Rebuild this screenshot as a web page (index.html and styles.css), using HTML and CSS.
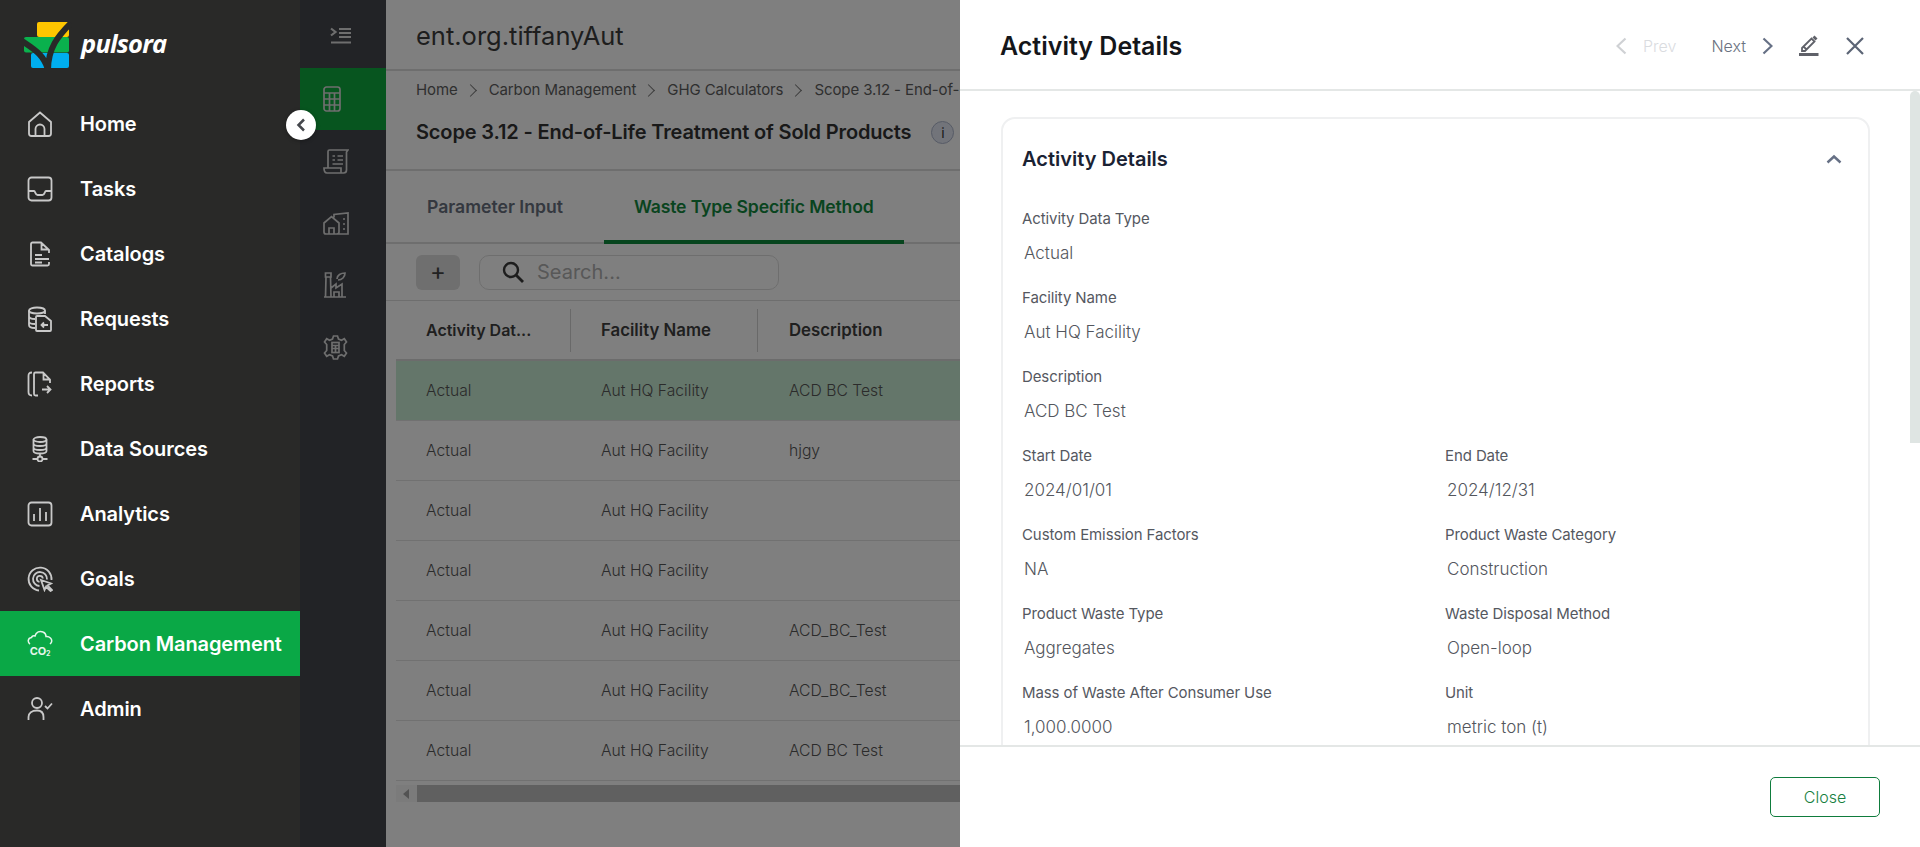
FILE: index.html
```html
<!DOCTYPE html>
<html lang="en">
<head>
    <meta charset="UTF-8">
    <meta name="viewport" content="width=device-width, initial-scale=1.0">
    <title>Pulsora - Activity Details</title>
    <link rel="stylesheet" href="styles.css">
</head>
<body>
    <div class="app">
        <aside class="sidebar">
            <div class="brand">
                <svg class="brand-mark" width="48" height="48" viewBox="0 0 48 48">
                    <rect x="13" y="0" width="32" height="15" rx="2" fill="#ffc600"/>
                    <rect x="0" y="15" width="45" height="15.5" rx="2" fill="#0ab14d"/>
                    <rect x="7" y="31" width="38" height="15" rx="2" fill="#00aeef"/>
                    <path d="M-2 19 C8 26 20 32 24 48 M47 1 C34 14 24 26 24 48" fill="none" stroke="#292928" stroke-width="6"/>
                    <path d="M-1 12 H9 V15 H-1 Z" fill="#292928"/>
                </svg>
                <span class="brand-name">pulsora</span>
            </div>
            <nav class="nav">
                <a class="nav-item">
                    <svg class="nav-icon" viewBox="0 0 26 26"><path d="M2 11 L13 1.500 L24 11 V22.500 A2.500 2.500 0 0 1 21.500 25 H4.500 A2.500 2.500 0 0 1 2 22.500 Z M8.500 25 V18 A4.500 4.500 0 0 1 17.500 18 V25"/></svg>
                    <span>Home</span>
                </a>
                <a class="nav-item">
                    <svg class="nav-icon" viewBox="0 0 26 26"><rect x="1.500" y="1.500" width="23" height="23" rx="3"/><path d="M1.500 15 H7 C8.500 15 8 19 10.500 19 H15.500 C18 19 17.500 15 19 15 H24.500"/></svg>
                    <span>Tasks</span>
                </a>
                <a class="nav-item">
                    <svg class="nav-icon" viewBox="0 0 26 26"><path d="M22 21 V23 A1.500 1.500 0 0 1 20.500 24.500 H5.500 A1.500 1.500 0 0 1 4 23 V3 A1.500 1.500 0 0 1 5.500 1.500 H14 L22 9 V12 M14.500 2 V8.500 H21.500 M8 14 H15 M8 18 H22 M8 21.500 H15"/></svg>
                    <span>Catalogs</span>
                </a>
                <a class="nav-item">
                    <svg class="nav-icon" viewBox="0 0 26 26"><ellipse cx="10" cy="4.500" rx="8" ry="3"/><path d="M2 4.500 V19 C2 21 4 22 8 22 M18 4.500 V8 M2 10 C2 12 5 13 8 13 M2 15.500 C2 17 4 18 8 18"/><path d="M9 11 A1 1 0 0 1 10 10 H18 L24 15 V24 A1 1 0 0 1 23 25 H10 A1 1 0 0 1 9 24 Z M21 19 H14.500 M17 16.500 L14.500 19 L17 21.500"/></svg>
                    <span>Requests</span>
                </a>
                <a class="nav-item">
                    <svg class="nav-icon" viewBox="0 0 26 26"><path d="M5 1.500 C2 1.500 1.500 3 1.500 5 V21 C1.500 23 2 24.500 5 24.500 M11 24.500 H8.500 A1.500 1.500 0 0 1 7 23 V3 A1.500 1.500 0 0 1 8.500 1.500 H16 L23 8.500 V12 M16.500 2 V8.500 H22.500 M15 18.500 H23.500 M20 15 L23.500 18.500 L20 22"/></svg>
                    <span>Reports</span>
                </a>
                <a class="nav-item">
                    <svg class="nav-icon" viewBox="0 0 26 26"><ellipse cx="13" cy="3.500" rx="6.500" ry="2.500"/><path d="M6.500 3.500 V15 C6.500 16.500 9 17.500 13 17.500 C17 17.500 19.500 16.500 19.500 15 V3.500 M6.500 7.500 C6.500 9 9 10 13 10 C17 10 19.500 9 19.500 7.500 M6.500 11.500 C6.500 13 9 14 13 14 C17 14 19.500 13 19.500 11.500 M13 17.500 V20.500 M5.500 23 H10.500 M15.500 23 H20.500"/><circle cx="13" cy="23" r="2.500"/></svg>
                    <span>Data Sources</span>
                </a>
                <a class="nav-item">
                    <svg class="nav-icon" viewBox="0 0 26 26"><rect x="1.500" y="1.500" width="23" height="23" rx="3"/><path d="M7 20 V13 M13 20 V7 M19 20 V11"/></svg>
                    <span>Analytics</span>
                </a>
                <a class="nav-item">
                    <svg class="nav-icon" viewBox="0 0 26 26"><path d="M24.500 14 A11.500 11.500 0 1 0 12 24.500 M20 13.500 A7 7 0 1 0 12.500 20 M15.800 12.500 A3 3 0 1 0 12.500 15.800"/><path d="M14 14 L24 17.500 L20.500 19.500 L25 24 L23.500 25 L19 20.800 L17.500 24 Z"/></svg>
                    <span>Goals</span>
                </a>
                <a class="nav-item is-active">
                    <span class="co2-icon">
                        <svg class="cloud-icon" viewBox="0 0 26 15"><path d="M3 14 C0.500 12.500 0.500 8 4.500 7.500 C5 6 6.500 5.500 8 6 C9 2 13 0.500 16 2 C18.500 3 19 5 19 6.500 C22.500 6 25.500 9 24.500 12 C24.200 13 23.500 13.500 23 14"/></svg>
                        <span class="co2-text">CO<sub>2</sub></span>
                    </span>
                    <span>Carbon Management</span>
                </a>
                <a class="nav-item">
                    <svg class="nav-icon" viewBox="0 0 26 26"><circle cx="10" cy="7" r="5"/><path d="M1.500 24 V21 C1.500 17 5 14.500 10 14.500 C13.500 14.500 16.500 16 16.500 21 V24 M18 10 L20.500 12.500 L25 7.500"/></svg>
                    <span>Admin</span>
                </a>
            </nav>
        </aside>
        <button class="sidebar-toggle" aria-label="Collapse">
            <svg width="12" height="14" viewBox="0 0 12 14"><path d="M9 1.500 L3.500 7 L9 12.500" fill="none" stroke="#45474c" stroke-width="2.500"/></svg>
        </button>

        <div class="workspace">
            <div class="rail">
                <div class="rail-item rail-top">
                    <svg class="rail-icon" width="22" height="18" viewBox="0 0 22 18"><path d="M1 1.500 L5.500 5 L1 8.500 M9 2 H21 M9 6 H21 M9 10 H21 M1 15.500 H21" stroke-width="2.200"/></svg>
                </div>
                <div class="rail-item is-active">
                    <svg class="rail-icon" width="18" height="26" viewBox="0 0 18 26"><rect x="1" y="1" width="16" height="24" rx="2.500"/><path d="M1 7 H17 M1 13 H17 M1 19 H17 M6.500 7 V25 M11.500 7 V25"/></svg>
                </div>
                <div class="rail-item">
                    <svg class="rail-icon" width="26" height="25" viewBox="0 0 26 25"><path d="M5 19 V2.500 A1.500 1.500 0 0 1 6.500 1 H25 L23.500 3 V21 A3 3 0 0 1 20.500 24 H4 C2 24 1 22.500 1 19 H18 V24"/><path d="M9.500 7 H12 M14.500 7 H20 M9.500 11 H12 M14.500 11 H20 M9.500 15 H20"/></svg>
                </div>
                <div class="rail-item">
                    <svg class="rail-icon" width="26" height="23" viewBox="0 0 26 23"><path d="M1 11 L8.500 4.500 L16 11 V20 A2 2 0 0 1 14 22 H3 A2 2 0 0 1 1 20 Z M6 22 V16 H11 V22 M11 5.500 V2.500 L25 1 V22 H16 M20 7 H22 M20 12 H22 M20 17 H22"/></svg>
                </div>
                <div class="rail-item">
                    <svg class="rail-icon" width="24" height="26" viewBox="0 0 24 26"><path d="M1 25 H23 M2.500 25 L3 5 M8 25 L7.500 5 M2.500 1 H8 V5 H2.500 Z M8 16 L13 12 V16 L19 12 V25 M11 25 V20 H16 V25 M14 7 C14 3 18 1 22 1 C22 5 19 8 15 8"/></svg>
                </div>
                <div class="rail-item">
                    <svg class="rail-icon" width="25" height="25" viewBox="0 0 25 25"><path d="M10.500 1 H14.500 L15.500 4 L18.500 5.300 L21.300 3.700 L23.500 7 L21.300 9.500 V15.500 L23.500 18 L21.300 21.300 L18.500 19.700 L15.500 21 L14.500 24 H10.500 L9.500 21 L6.500 19.700 L3.700 21.300 L1.500 18 L3.700 15.500 V9.500 L1.500 7 L3.700 3.700 L6.500 5.300 L9.500 4 Z"/><rect x="9" y="7.500" width="7" height="10"/><path d="M9 10.500 H16 M9 13.500 H16 M12.500 10.500 V17.500"/></svg>
                </div>
            </div>

            <main class="main">
                <header class="main-top">ent.org.tiffanyAut</header>
                <div class="page-head">
                    <div class="crumbs">
                        <span>Home</span><i class="crumb-sep"></i>
                        <span>Carbon Management</span><i class="crumb-sep"></i>
                        <span>GHG Calculators</span><i class="crumb-sep"></i>
                        <span class="crumb-last">Scope 3.12 - End-of-Life Treatment of Sold Products</span>
                    </div>
                    <div class="page-title">
                        <h1>Scope 3.12 - End-of-Life Treatment of Sold Products</h1>
                        <span class="info-badge">i</span>
                    </div>
                </div>
                <div class="tabs">
                    <span class="tab">Parameter Input</span>
                    <span class="tab is-active">Waste Type Specific Method</span>
                </div>
                <div class="toolbar">
                    <button class="add-btn" aria-label="Add">+</button>
                    <div class="search">
                        <svg width="24" height="24" viewBox="0 0 24 24"><circle cx="10" cy="10" r="7" fill="none" stroke="#3a3a3a" stroke-width="2.400"/><path d="M15 15 L22 22" stroke="#3a3a3a" stroke-width="2.800"/></svg>
                        <span>Search...</span>
                    </div>
                </div>
                <div class="grid-wrap">
                    <div class="grid-head">
                        <div class="cell cell-a">Activity Dat...</div>
                        <div class="cell cell-b">Facility Name</div>
                        <div class="cell cell-c">Description</div>
                    </div>
                    <div class="grid-row is-selected">
                        <div class="cell cell-a">Actual</div><div class="cell cell-b">Aut HQ Facility</div><div class="cell cell-c">ACD BC Test</div>
                    </div>
                    <div class="grid-row">
                        <div class="cell cell-a">Actual</div><div class="cell cell-b">Aut HQ Facility</div><div class="cell cell-c">hjgy</div>
                    </div>
                    <div class="grid-row">
                        <div class="cell cell-a">Actual</div><div class="cell cell-b">Aut HQ Facility</div><div class="cell cell-c"></div>
                    </div>
                    <div class="grid-row">
                        <div class="cell cell-a">Actual</div><div class="cell cell-b">Aut HQ Facility</div><div class="cell cell-c"></div>
                    </div>
                    <div class="grid-row">
                        <div class="cell cell-a">Actual</div><div class="cell cell-b">Aut HQ Facility</div><div class="cell cell-c">ACD_BC_Test</div>
                    </div>
                    <div class="grid-row">
                        <div class="cell cell-a">Actual</div><div class="cell cell-b">Aut HQ Facility</div><div class="cell cell-c">ACD_BC_Test</div>
                    </div>
                    <div class="grid-row">
                        <div class="cell cell-a">Actual</div><div class="cell cell-b">Aut HQ Facility</div><div class="cell cell-c">ACD BC Test</div>
                    </div>
                    <div class="h-scroll">
                        <span class="h-scroll-arrow"></span>
                        <span class="h-scroll-thumb"></span>
                    </div>
                </div>
            </main>
            <div class="backdrop"></div>
        </div>

        <section class="drawer">
            <header class="drawer-head">
                <h2>Activity Details</h2>
                <div class="drawer-actions">
                    <div class="pager is-disabled">
                        <svg width="11" height="18" viewBox="0 0 11 18"><path d="M9.500 1.500 L1.500 9 L9.500 16.500"/></svg>
                        <span>Prev</span>
                    </div>
                    <div class="pager">
                        <span>Next</span>
                        <svg width="11" height="18" viewBox="0 0 11 18"><path d="M1.500 1.500 L9.500 9 L1.500 16.500"/></svg>
                    </div>
                    <svg class="edit-icon" width="20" height="21" viewBox="0 0 20 21"><path d="M3 13 L12.500 3.500 L15.500 6.500 L6 16 H3 Z M5 12 L7.500 14.500" fill="none" stroke="#5f6169" stroke-width="1.800"/><path d="M13.500 2.500 L15.500 0.500 L18.500 3.500 L16.500 5.500 Z" fill="#5f6169"/><rect x="0" y="18" width="19.500" height="3" fill="#5f6169"/></svg>
                    <svg class="close-icon" width="18" height="18" viewBox="0 0 18 18"><path d="M1 1 L17 17 M17 1 L1 17"/></svg>
                </div>
            </header>
            <div class="drawer-body">
                <div class="detail-card">
                    <div class="card-head">
                        <h3>Activity Details</h3>
                        <svg width="16" height="10" viewBox="0 0 16 10"><path d="M1.500 8.500 L8 2.500 L14.500 8.500" fill="none" stroke="#667085" stroke-width="2.400"/></svg>
                    </div>
                    <div class="fields">
                        <div class="field field-wide"><label>Activity Data Type</label><p>Actual</p></div>
                        <div class="field field-wide"><label>Facility Name</label><p>Aut HQ Facility</p></div>
                        <div class="field field-wide"><label>Description</label><p>ACD BC Test</p></div>
                        <div class="field"><label>Start Date</label><p>2024/01/01</p></div>
                        <div class="field"><label>End Date</label><p>2024/12/31</p></div>
                        <div class="field"><label>Custom Emission Factors</label><p>NA</p></div>
                        <div class="field"><label>Product Waste Category</label><p>Construction</p></div>
                        <div class="field"><label>Product Waste Type</label><p>Aggregates</p></div>
                        <div class="field"><label>Waste Disposal Method</label><p>Open-loop</p></div>
                        <div class="field"><label>Mass of Waste After Consumer Use</label><p>1,000.0000</p></div>
                        <div class="field"><label>Unit</label><p>metric ton (t)</p></div>
                    </div>
                </div>
                <span class="v-scroll"></span>
            </div>
            <footer class="drawer-foot">
                <button class="close-btn">Close</button>
            </footer>
        </section>
    </div>
</body>
</html>
```

FILE: styles.css
```css
:root {
    --ui-font: Inter, "Noto Sans", sans-serif;
    --green: #0f7c3d;
    --line: #e4e7e6;
}

* {
    box-sizing: border-box;
}

html, body {
    height: 100%;
}

body {
    margin: 0;
    font-family: var(--ui-font);
    background: #fff;
    overflow: hidden;
}

h1, h2, h3, p {
    margin: 0;
}

.app {
    position: relative;
    display: flex;
    height: 847px;
    overflow: hidden;
}

/* left sidebar */
.sidebar {
    width: 300px;
    flex: none;
    background: #292928;
    color: #fff;
}

.brand {
    display: flex;
    align-items: flex-start;
    height: 91px;
    padding: 22px 0 0 24px;
}

.brand-mark {
    overflow: hidden;
    flex: none;
}

.brand-name {
    margin: 4px 0 0 9px;
    font-family: "Open Sans", sans-serif;
    font-size: 25.500px;
    font-weight: 700;
    font-style: italic;
    letter-spacing: -0.8px;
    line-height: 34px;
}

.nav-item {
    display: flex;
    align-items: center;
    height: 65px;
    padding-left: 27px;
    font-size: 20px;
    font-weight: 600;
    letter-spacing: -0.1px;
}

.nav-item.is-active {
    background: #0aa846;
}

.nav-icon {
    width: 26px;
    height: 26px;
    margin-right: 27px;
    flex: none;
    fill: none;
    stroke: #c9c9c9;
    stroke-width: 1.800;
}

.co2-icon {
    display: flex;
    flex-direction: column;
    align-items: center;
    width: 26px;
    margin-right: 27px;
    flex: none;
    color: #e6f6ec;
}

.cloud-icon {
    width: 26px;
    height: 15px;
    fill: none;
    stroke: #e6f6ec;
    stroke-width: 1.500;
}

.co2-text {
    font-size: 11px;
    font-weight: 700;
    line-height: 11px;
    margin-top: 1px;
}

.co2-text sub {
    font-size: 7px;
    line-height: 0;
    vertical-align: -1px;
}

.sidebar-toggle {
    position: absolute;
    left: 286px;
    top: 110px;
    z-index: 5;
    display: flex;
    align-items: center;
    justify-content: center;
    width: 30px;
    height: 30px;
    padding: 0;
    border: none;
    border-radius: 50%;
    background: #fff;
    box-shadow: 0 1px 4px rgba(0, 0, 0, 0.3);
}

/* everything behind the drawer */
.workspace {
    position: relative;
    display: flex;
    flex: 1;
    min-width: 0;
}

.backdrop {
    position: absolute;
    inset: 0;
    background: rgba(0, 0, 0, 0.5);
}

.rail {
    width: 86px;
    flex: none;
    background: #44464c;
}

.rail-item {
    display: flex;
    align-items: center;
    height: 62px;
    padding-left: 23px;
}

.rail-top {
    height: 68px;
    padding: 4px 0 0 30px;
}

.rail-item.is-active {
    background: #0eaa3e;
}

.rail-icon {
    fill: none;
    stroke: #dcdcdc;
    stroke-width: 1.700;
}

.main {
    flex: 1;
    min-width: 0;
    overflow: hidden;
    background: #fff;
}

.main-top {
    height: 71px;
    padding: 20px 0 0 30px;
    border-bottom: 2px solid #ddd;
    color: #3d3d3d;
    font-size: 25.500px;
    line-height: 32px;
}

.page-head {
    height: 100px;
    padding: 9px 0 0 30px;
    border-bottom: 2px solid #ddd;
}

.crumbs {
    display: flex;
    align-items: center;
    color: #5e5e5e;
    font-size: 15px;
    letter-spacing: -0.1px;
    line-height: 20px;
    white-space: nowrap;
}

.crumb-sep {
    width: 9px;
    height: 9px;
    margin: 0 14px 0 8px;
    border-top: 1.500px solid #777;
    border-right: 1.500px solid #777;
    transform: rotate(45deg);
}

.page-title {
    display: flex;
    align-items: center;
    gap: 20px;
    margin-top: 17px;
}

.page-title h1 {
    color: #333;
    font-size: 20px;
    font-weight: 600;
    letter-spacing: -0.15px;
    line-height: 30px;
    white-space: nowrap;
}

.info-badge {
    display: flex;
    align-items: center;
    justify-content: center;
    width: 23px;
    height: 23px;
    border: 1px solid #aeb6cc;
    border-radius: 50%;
    background: #e4e9f5;
    color: #333;
    font-size: 14px;
}

.tabs {
    display: flex;
    gap: 10px;
    height: 73px;
    padding-left: 10px;
    border-bottom: 2px solid #ddd;
}

.tab {
    padding: 0 31px;
    color: #69707e;
    font-size: 17.600px;
    font-weight: 600;
    line-height: 72px;
    white-space: nowrap;
}

.tab.is-active {
    height: 73px;
    padding: 0 30px;
    border-bottom: 4px solid #0e8a3c;
    color: #13893f;
    letter-spacing: -0.15px;
}

.toolbar {
    display: flex;
    align-items: center;
    gap: 19px;
    height: 57px;
    padding: 0 0 0 30px;
    border-bottom: 1px solid #ddd;
}

.add-btn {
    width: 44px;
    height: 35px;
    padding: 0;
    border: none;
    border-radius: 6px;
    background: #dedede;
    color: #444;
    font-family: var(--ui-font);
    font-size: 24px;
    line-height: 30px;
}

.search {
    display: flex;
    align-items: center;
    gap: 12px;
    width: 300px;
    height: 35px;
    padding-left: 21px;
    border: 1px solid #ddd;
    border-radius: 10px;
    color: #b0b0b0;
    font-size: 20px;
}

.grid-wrap {
    margin-left: 10px;
}

.grid-head, .grid-row {
    display: flex;
    align-items: center;
    height: 60px;
    border-bottom: 1px solid #e2e2e2;
}

.grid-head {
    color: #3f3f3f;
    font-size: 16.800px;
    font-weight: 600;
    border-bottom: 2px solid #d9d9d9;
}

.grid-row {
    color: #565656;
    font-size: 15.700px;
    font-weight: 300;
}

.grid-row.is-selected {
    background: #c9ecd5;
}

.cell {
    padding-left: 30px;
    white-space: nowrap;
}

.cell-a {
    width: 175px;
}

.cell-b {
    width: 187px;
}

.cell-c {
    flex: 1;
    padding-left: 31px;
}

.grid-head .cell-a, .grid-head .cell-b {
    height: 43px;
    line-height: 43px;
    border-right: 1px solid #d3d3d3;
}

.grid-head .cell-a {
    font-size: 16px;
}

.h-scroll {
    display: flex;
    height: 17px;
    margin-top: 4px;
    background: #f6f6f6;
}

.h-scroll-arrow {
    position: relative;
    width: 21px;
}

.h-scroll-arrow::before {
    content: "";
    position: absolute;
    left: 7px;
    top: 4px;
    border-top: 5px solid transparent;
    border-bottom: 5px solid transparent;
    border-right: 6px solid #a6a6a6;
}

.h-scroll-thumb {
    flex: 1;
    background: #c0c0c0;
}

/* details drawer */
.drawer {
    position: absolute;
    top: 0;
    right: 0;
    bottom: 0;
    z-index: 3;
    display: flex;
    flex-direction: column;
    width: 960px;
    background: #fff;
}

.drawer-head {
    display: flex;
    align-items: center;
    justify-content: space-between;
    height: 91px;
    padding: 2px 56px 0 40px;
    border-bottom: 2px solid var(--line);
}

.drawer-head h2 {
    color: #14161a;
    font-size: 25px;
    font-weight: 600;
}

.drawer-actions {
    display: flex;
    align-items: center;
}

.pager {
    display: flex;
    align-items: center;
    gap: 16px;
    margin-right: 35px;
    color: #6b7280;
    font-size: 16px;
    font-weight: 300;
}

.pager svg {
    fill: none;
    stroke: #667085;
    stroke-width: 2.200;
}

.pager:nth-child(2) {
    margin-right: 26px;
}

.pager.is-disabled {
    color: #dadcdf;
}

.pager.is-disabled svg {
    stroke: #cfd1d4;
}

.edit-icon {
    margin-right: 27px;
}

.close-icon {
    fill: none;
    stroke: #5b6475;
    stroke-width: 2.200;
}

.drawer-body {
    position: relative;
    flex: 1;
    min-height: 0;
    overflow: hidden;
    padding: 26px 0 0 41px;
}

.detail-card {
    width: 869px;
    padding: 0 20px 40px 19px;
    border: 2px solid #eff0f1;
    border-radius: 14px;
}

.card-head {
    display: flex;
    align-items: center;
    justify-content: space-between;
    height: 79px;
    padding-right: 6px;
}

.card-head h3 {
    color: #1a2233;
    font-size: 20px;
    font-weight: 600;
}

.fields {
    display: grid;
    grid-template-columns: 423px 1fr;
    row-gap: 20px;
    margin-top: 11px;
}

.field-wide {
    grid-column: 1 / -1;
}

.field label {
    display: block;
    color: #55585f;
    font-size: 15px;
    letter-spacing: -0.1px;
    line-height: 20px;
}

.field p {
    margin-top: 9px;
    padding-left: 2px;
    color: #53565d;
    font-size: 17px;
    font-weight: 300;
    line-height: 30px;
}

.v-scroll {
    position: absolute;
    top: 0;
    right: 0;
    width: 10px;
    height: 352px;
    border-radius: 5px 5px 0 0;
    background: #dfe5e3;
}

.drawer-foot {
    position: relative;
    display: flex;
    align-items: flex-start;
    justify-content: flex-end;
    flex: none;
    height: 102px;
    padding: 30px 40px 0 0;
    border-top: 2px solid var(--line);
    background: #fff;
}

.close-btn {
    width: 110px;
    height: 40px;
    border: 1px solid var(--green);
    border-radius: 5px;
    background: #fff;
    color: #16803f;
    font-family: var(--ui-font);
    font-size: 16px;
    font-weight: 300;
}
```
